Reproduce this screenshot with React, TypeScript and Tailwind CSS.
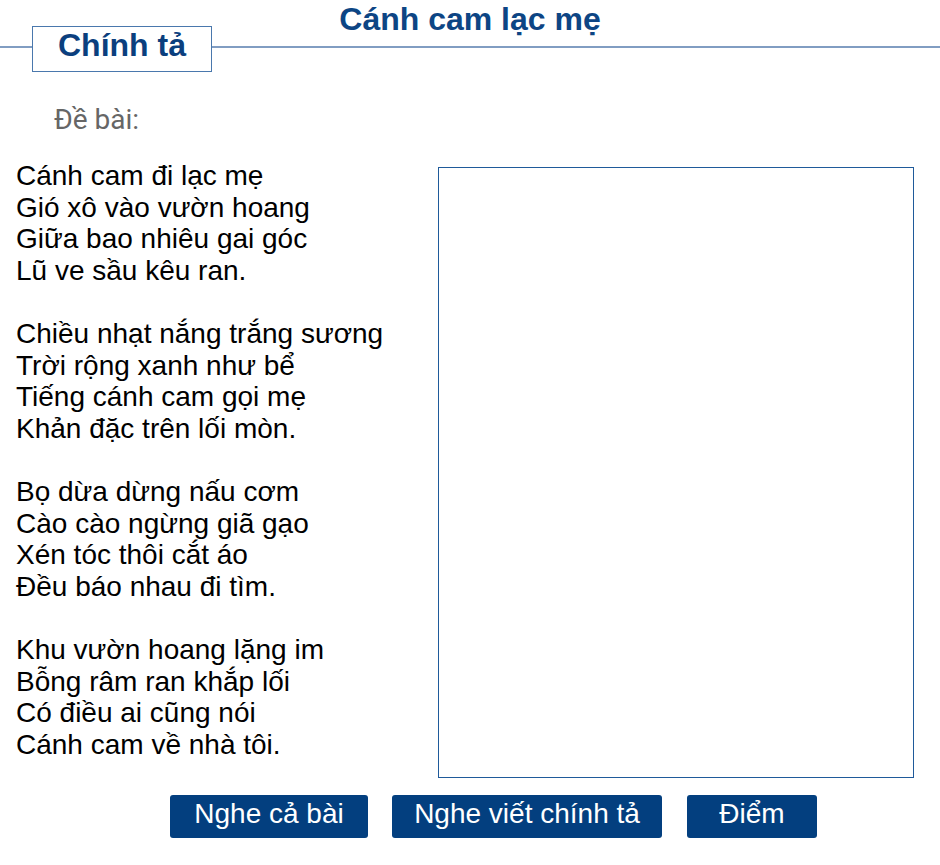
import * as React from "react";

const stanzas: string[][] = [
  ["Cánh cam đi lạc mẹ", "Gió xô vào vườn hoang", "Giữa bao nhiêu gai góc", "Lũ ve sầu kêu ran."],
  ["Chiều nhạt nắng trắng sương", "Trời rộng xanh như bể", "Tiếng cánh cam gọi mẹ", "Khản đặc trên lối mòn."],
  ["Bọ dừa dừng nấu cơm", "Cào cào ngừng giã gạo", "Xén tóc thôi cắt áo", "Đều báo nhau đi tìm."],
  ["Khu vườn hoang lặng im", "Bỗng râm ran khắp lối", "Có điều ai cũng nói", "Cánh cam về nhà tôi."],
];

const buttons = [
  { label: "Nghe cả bài", className: "w-[198px]" },
  { label: "Nghe viết chính tả", className: "ml-6 w-[270px]" },
  { label: "Điểm", className: "ml-[25px] w-[130px]" },
];

export default function App() {
  return (
    <div className="h-[865px] w-[940px] overflow-hidden bg-white font-['Liberation_Sans',Arial,sans-serif] text-black">
      <header className="pt-[3px]">
        <h1 className="h-[23px] text-center text-[32px] font-bold leading-[32px] text-[#0d4584]">
          Cánh cam lạc mẹ
        </h1>
        <div className="flex items-start">
          <div className="mt-5 h-[2px] w-8 bg-[#819dc2]" />
          <div className="flex h-[46px] w-[180px] justify-center border border-[#4a78ad] bg-white pt-[2px]">
            <span className="text-[32px] font-bold leading-none text-[#0b3f7e]">Chính tả</span>
          </div>
          <div className="mt-5 h-[2px] flex-1 bg-[#819dc2]" />
        </div>
      </header>

      <p className="mt-8 pl-[54px] font-['Roboto',sans-serif] text-[28px] leading-[32px] text-[#666666]">
        Đề bài:
      </p>

      <main className="mt-6 flex items-start">
        <div className="w-[438px] pl-4 text-[28px] leading-[31.6px]">
          {stanzas.map((stanza, i) => (
            <div key={i} className={i > 0 ? "mt-[31.6px]" : ""}>
              {stanza.map((line) => (
                <div key={line}>{line}</div>
              ))}
            </div>
          ))}
        </div>
        <div className="mt-[7px] h-[611px] w-[476px] border border-[#1f5a9a]" />
      </main>

      <div className="mt-[17px] flex pl-[170px]">
        {buttons.map((b) => (
          <button
            key={b.label}
            type="button"
            className={`${b.className} flex h-[43px] items-center justify-center rounded-[3px] bg-[#033f7f] pb-[6px] text-[28px] leading-none text-white`}
          >
            {b.label}
          </button>
        ))}
      </div>
    </div>
  );
}
